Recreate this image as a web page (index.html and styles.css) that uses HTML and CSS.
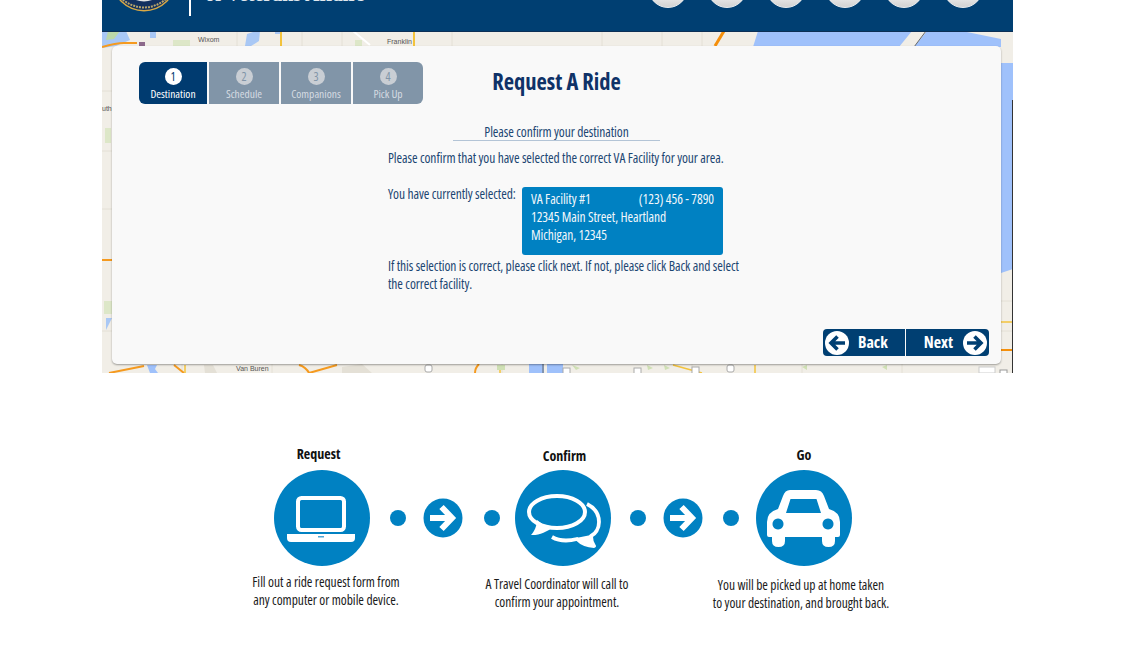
FILE: index.html
```html
<!DOCTYPE html>
<html lang="en">
<head>
<meta charset="utf-8">
<title>Request A Ride</title>
<link rel="stylesheet" href="styles.css">
</head>
<body>
<div class="hero">
  <header class="topbar">
    <div class="brand">
      <svg class="seal" viewBox="0 0 66 66" width="66" height="66">
        <circle cx="33" cy="33" r="32.500" fill="#d9a945"/>
        <circle cx="33" cy="33" r="31" fill="#12305f"/>
        <circle cx="33" cy="33" r="22.500" fill="#e4e6e6"/>
        <path d="M13 43q20 11 40 0" fill="none" stroke="#a8483a" stroke-width="3"/>
        <path d="M7 50q26 23 52 0" fill="none" stroke="#b9a56c" stroke-width="2" stroke-dasharray="2 1"/>
      </svg>
      <span class="brand-rule"></span>
      <span class="brand-name">of Veterans Affairs</span>
    </div>
    <nav class="topnav">
      <span class="topnav-dot"></span><span class="topnav-dot"></span><span class="topnav-dot"></span>
      <span class="topnav-dot"></span><span class="topnav-dot"></span><span class="topnav-dot"></span>
    </nav>
  </header>
  <main class="mapview">
    <svg class="maptiles" viewBox="0 0 911 342" width="911" height="342" aria-hidden="true">
      <rect width="911" height="342" fill="#f1eee7"/>
      <g fill="none" stroke="#e4e0d6" stroke-width="1">
        <path d="M0 60H10M0 120H10M0 178H10M0 300H10M135 0V16M200 0V16M240 0V16M350 0V16M500 0V16M560 0V16M600 0V16M80 333V342M170 333V342M400 333V342M590 333V342M700 333V342M800 333V342M899 270H911M899 300H911"/>
      </g>
      <path d="M251 0L268 14" fill="none" stroke="#fff" stroke-width="2"/>
      <path d="M0 0H24L28 9 14 15 0 17Z" fill="#a9c8f5"/>
      <path d="M6 0H18L12 8 4 9Z" fill="#bcd8a8"/>
      <path d="M3 97h6v15H3zM2 270h8v13H2zM71 9h17v6H71zM253 9h7v6h-7z" fill="#dde7c8"/>
      <path d="M48 1h6v6h-6zM145 3l9-3h4l-1 10-8 5h-6zM173 0h6v3h-6z" fill="#a9c8f5"/>
      <path d="M4 287h6l-6 12z" fill="#a9c8f5"/>
      <path d="M656 0H810L797 16H651Z" fill="#9fc1fb"/>
      <path d="M825 0L812 16H899V8L860 0Z" fill="#9fc1fb"/>
      <path d="M812 16L824 0" stroke="#666" stroke-width="1"/>
      <path d="M899 32H911V238L899 242Z" fill="#9fc1fb"/>
      <path d="M0 16Q14 12 22 12T35 12" fill="none" stroke="#f59a1f" stroke-width="2"/>
      <rect x="37" y="11" width="6" height="5" fill="#8d6a8c"/>
      <path d="M179 0V15" fill="none" stroke="#f3c33c" stroke-width="2"/>
      <path d="M312 0V15" fill="none" stroke="#f3c33c" stroke-width="2"/>
      <path d="M622 0L613 15" fill="none" stroke="#f58f0a" stroke-width="3"/>
      <path d="M0 229H10" fill="none" stroke="#f59a1f" stroke-width="2"/>
      <path d="M899 291H911" fill="none" stroke="#f3c33c" stroke-width="1.500"/>
      <path d="M899 319H911" fill="none" stroke="#f58f0a" stroke-width="2"/>
      <path d="M7 342L42 335M72 334L82 342M197 334Q204 336 207 342M207 342L235 334M373 342Q373 337 377 333" fill="none" stroke="#f59a1f" stroke-width="2"/>
      <path d="M83 334V342M398 334V342M653 334V342M571 334L600 342" fill="none" stroke="#f3c33c" stroke-width="1.500"/>
      <path d="M45 334h10l-2 4 3 4H48zM427 333h13v9h-13zM445 333h16v9h-16z" fill="#9fc1fb"/>
      <path d="M441 333V342" stroke="#8093b0" stroke-width="2"/>
      <path d="M102 334h9l4 8h-12zM240 336l20-3 10 9h-30z" fill="#e4e0d6"/>
      <path d="M395 334h8v5h-8zM470 334l8 3-4 2zM545 334l6 3-5 2zM562 334l6 3-5 2zM700 336l5-2v5zM780 336l5-2v5z" fill="#cfe0b4"/>
      <g fill="#fff" stroke="#aaa" stroke-width="1">
        <rect x="323" y="334" width="7" height="7" rx="2"/>
        <rect x="461" y="337" width="7" height="7"/>
        <rect x="532" y="337" width="7" height="7"/>
        <rect x="590" y="336" width="7" height="7"/>
        <rect x="625" y="334" width="7" height="7" rx="2"/>
      </g>
      <path d="M910.500 69V342" stroke="#333" stroke-width="1"/>
      <rect x="877" y="336" width="16" height="6" fill="#fff" stroke="#ccc"/>
      <rect x="898" y="339" width="7" height="4" fill="#fff" stroke="#999"/>
      <text class="maplabel" x="96" y="11">Wixom</text>
      <text class="maplabel" x="285" y="13">Franklin</text>
      <text class="maplabel" x="0" y="80">uth</text>
      <text class="maplabel" x="134" y="340">Van Buren</text>
    </svg>
    <section class="card">
      <div class="card-head">
        <ol class="stepper">
          <li class="stepper-item is-active"><span class="stepper-num">1</span><span>Destination</span></li>
          <li class="stepper-item"><span class="stepper-num">2</span><span>Schedule</span></li>
          <li class="stepper-item"><span class="stepper-num">3</span><span>Companions</span></li>
          <li class="stepper-item"><span class="stepper-num">4</span><span>Pick Up</span></li>
        </ol>
        <h1 class="card-title">Request A Ride</h1>
      </div>
      <h2 class="subhead">Please confirm your destination</h2>
      <div class="body-copy">
        <p class="lead">Please confirm that you have selected the correct VA Facility for your area.</p>
        <div class="selection">
          <span class="selection-label">You have currently selected:</span>
          <div class="facility">
            <div class="facility-top"><span>VA Facility #1</span><span>(123) 456 - 7890</span></div>
            <div>12345 Main Street, Heartland</div>
            <div>Michigan, 12345</div>
          </div>
        </div>
        <p class="note">If this selection is correct, please click next. If not, please click Back and select<br>the correct facility.</p>
      </div>
      <div class="actions">
        <button class="nav-btn" type="button">
          <svg class="nav-icon" viewBox="0 0 24 24" width="24" height="24"><circle cx="12" cy="12" r="12" fill="#fff"/><path d="M20 12H7M12.500 5.500L6 12l6.500 6.500" fill="none" stroke="#003f72" stroke-width="3.600"/></svg>
          <span>Back</span>
        </button>
        <button class="nav-btn nav-btn-next" type="button">
          <span>Next</span>
          <svg class="nav-icon" viewBox="0 0 24 24" width="24" height="24"><circle cx="12" cy="12" r="12" fill="#fff"/><path d="M4 12H17M11.500 5.500L18 12l-6.500 6.500" fill="none" stroke="#003f72" stroke-width="3.600"/></svg>
        </button>
      </div>
    </section>
  </main>
</div>

<section class="flow">
  <div class="flow-step step-request">
    <h3 class="flow-title">Request</h3>
    <div class="flow-disc">
      <svg viewBox="0 0 96 96" width="96" height="96"><rect x="24" y="28" width="46" height="32" rx="3.500" fill="none" stroke="#fff" stroke-width="4"/><path d="M13 64H81V68q0 4-4 4H17q-4 0-4-4Z" fill="#fff"/><rect x="44" y="66" width="6" height="1.500" fill="#4fa5d4"/></svg>
    </div>
    <p class="flow-caption">Fill out a ride request form from<br>any computer or mobile device.</p>
  </div>
  <div class="flow-link">
    <span class="flow-dot"></span>
    <svg class="flow-arrow" viewBox="0 0 40 40" width="40" height="40"><circle cx="20" cy="20" r="19.500" fill="#0081c2"/><path d="M7 20H27M18.500 9L29 20 18.500 31" fill="none" stroke="#fff" stroke-width="6"/></svg>
    <span class="flow-dot"></span>
  </div>
  <div class="flow-step step-confirm">
    <h3 class="flow-title">Confirm</h3>
    <div class="flow-disc">
      <svg viewBox="0 0 96 96" width="96" height="96"><path d="M72 34C80 38 84 44 84 52 84 59 80 64 76 66 76 70 77 73 79 76 72 76 66 73 62 69 54 71 44 71 37 67" fill="none" stroke="#fff" stroke-width="3.800" stroke-linejoin="round"/><path d="M61 68C66 72 72 76 80 76.500 77 72 76 69 76 65Z" fill="#fff"/><ellipse cx="42" cy="42" rx="28" ry="16" fill="#0081c2" stroke="#fff" stroke-width="4"/><path d="M22 50C22 56 19 62 16 65 24 65.500 32 62 38 57L30 56Z" fill="#fff"/></svg>
    </div>
    <p class="flow-caption">A Travel Coordinator will call to<br>confirm your appointment.</p>
  </div>
  <div class="flow-link link-two">
    <span class="flow-dot"></span>
    <svg class="flow-arrow" viewBox="0 0 40 40" width="40" height="40"><circle cx="20" cy="20" r="19.500" fill="#0081c2"/><path d="M7 20H27M18.500 9L29 20 18.500 31" fill="none" stroke="#fff" stroke-width="6"/></svg>
    <span class="flow-dot"></span>
  </div>
  <div class="flow-step step-go">
    <h3 class="flow-title">Go</h3>
    <div class="flow-disc">
      <svg viewBox="0 0 96 96" width="96" height="96"><path fill="#fff" fill-rule="evenodd" d="M34 20H60q6 0 8 6l5 13q11 3 11 13V65q0 2-2 2H79v4q0 6-6.500 6T66 71V67H29v4q0 6-6.500 6T16 71V67H13q-2 0-2-2V52q0-10 11-13l5-13q2-6 7-6ZM34.500 29 30 43H65L60.500 29ZM22 48.500a5.500 5.500 0 1 0 .01 0ZM72 48.500a5.500 5.500 0 1 0 .01 0Z"/></svg>
    </div>
    <p class="flow-caption">You will be picked up at home taken<br>to your destination, and brought back.</p>
  </div>
</section>
</body>
</html>
```
FILE: styles.css
```css
* { box-sizing: border-box; }
html, body { margin: 0; padding: 0; }
body {
  width: 1140px;
  height: 654px;
  overflow: hidden;
  background: #fff;
  font-family: "Open Sans", "Liberation Sans", sans-serif;
  font-stretch: condensed;
}
.hero { width: 911px; margin-left: 102px; }
.topbar {
  height: 32px;
  background: #003f72;
  border-bottom: 1px solid #0c2f55;
  display: flex;
  justify-content: space-between;
  overflow: hidden;
}
.brand { display: flex; align-items: flex-start; height: 16px; }
.seal { margin: -54px 0 0 8.500px; flex: none; }
.brand-rule { width: 2px; height: 16px; background: #fff; margin-left: 12.500px; }
.brand-name {
  font-family: "Liberation Serif", serif;
  font-stretch: normal;
  font-weight: 700;
  font-size: 20px;
  line-height: 20px;
  color: #dfe7ee;
  margin: -16px 0 0 14px;
  white-space: nowrap;
}
.topnav { display: flex; gap: 19px; margin: -32px 30px 0 0; }
.topnav-dot {
  width: 40px;
  height: 40px;
  border-radius: 50%;
  background: linear-gradient(#c3c7cb 0 60%, #e4e4e4 80%, #d2d2d2);
  border: 1px solid #eef0f2;
}
.mapview { position: relative; height: 341px; padding: 14px 12px 0 10px; overflow: hidden; }
.maptiles { position: absolute; left: 0; top: -1px; }
.maplabel { font-family: "Liberation Sans", sans-serif; font-size: 7px; fill: #555; }
.card {
  position: relative;
  height: 318px;
  background: #f9f9f9;
  border-radius: 5px;
  box-shadow: 0 1px 2px rgba(0,0,0,.35);
  color: #1c4672;
}
.card-head {
  display: grid;
  grid-template-columns: 1fr auto 1fr;
  align-items: start;
  padding: 16px 27px 0;
}
.stepper { display: flex; gap: 2px; list-style: none; margin: 0; padding: 0; width: 284px; height: 42px; }
.stepper-item {
  flex: 0 0 70px;
  display: flex;
  flex-direction: column;
  align-items: center;
  padding-top: 6px;
  background: #8195a8;
  color: #d5dbe2;
  font-size: 11.500px;
  line-height: 14px;
}
.stepper-item:first-child { flex-basis: 68px; border-radius: 6px 0 0 6px; }
.stepper-item:last-child { border-radius: 0 6px 6px 0; }
.stepper-item.is-active { background: #003b70; color: #fff; }
.stepper-num {
  width: 17px;
  height: 17px;
  border-radius: 50%;
  background: #c9ced4;
  color: #8195a8;
  font-size: 12px;
  line-height: 17px;
  text-align: center;
  margin-bottom: 2px;
}
.is-active .stepper-num { background: #fff; color: #003b70; }
.card-title {
  margin: 5px 0 0;
  font-size: 22.500px;
  line-height: 30px;
  font-weight: 700;
  color: #0f3268;
  white-space: nowrap;
}
.subhead {
  width: 207px;
  margin: 17px auto 0;
  padding: 0;
  height: 20px;
  border-bottom: 1px solid #b3c4d6;
  font-size: 13.500px;
  line-height: 22px;
  letter-spacing: -.080px;
  font-weight: 400;
  text-align: center;
  white-space: nowrap;
  color: #1c4672;
}
.body-copy { width: 356px; margin: 8px 0 0 276px; font-size: 13.500px; letter-spacing: -.070px; line-height: 18px; }
.lead { margin: 0; white-space: nowrap; }
.selection { display: flex; align-items: flex-start; margin-top: 20px; }
.selection-label { flex: 0 0 134px; white-space: nowrap; margin-top: -2px; }
.facility {
  width: 201px;
  height: 68px;
  padding: 3px 9px;
  background: #0081c2;
  border-radius: 3px;
  color: #f2f7fb;
}
.facility-top { display: flex; justify-content: space-between; }
.note { margin: 2px 0 0; white-space: nowrap; }
.actions { position: absolute; right: 12px; bottom: 8px; display: flex; gap: 1px; }
.nav-btn {
  width: 82px;
  height: 27px;
  border: 0;
  padding: 0 2px;
  display: flex;
  align-items: center;
  justify-content: flex-start;
  background: #003f72;
  color: #fff;
  font-family: inherit;
  font-stretch: condensed;
  font-weight: 700;
  font-size: 16px;
  line-height: 27px;
  border-radius: 4px 0 0 4px;
}
.nav-btn span { margin-left: 9px; }
.nav-btn-next { width: 83px; border-radius: 0 4px 4px 0; justify-content: flex-end; }
.nav-btn-next span { margin: 0 10px 0 0; }
.nav-icon { flex: none; }
.flow {
  display: flex;
  align-items: flex-start;
  margin: 71px 0 0 274px;
  color: #1b1b1b;
}
.flow-step { width: 96px; flex: none; display: flex; flex-direction: column; align-items: center; }
.flow-title {
  height: 26px;
  margin: 0;
  font-size: 14px;
  line-height: 22px;
  font-weight: 700;
  color: #111;
  white-space: nowrap;
}
.flow-disc { width: 96px; height: 96px; border-radius: 50%; background: #0081c2; }
.flow-disc svg { display: block; }
.flow-caption {
  margin: 7px 0 0;
  font-size: 13.500px;
  letter-spacing: -.030px;
  line-height: 18px;
  text-align: center;
  white-space: nowrap;
}
.step-request .flow-title { margin-left: -7px; line-height: 20px; }
.step-request .flow-caption { margin-left: 8px; }
.step-confirm .flow-title { margin-left: 3px; line-height: 24px; }
.step-confirm .flow-caption { margin: 9px 0 0 -12px; }
.step-go .flow-caption { margin: 10px 0 0 -6px; }
.flow-link {
  width: 145px;
  flex: none;
  height: 96px;
  margin-top: 26px;
  display: flex;
  align-items: center;
  padding-left: 20px;
}
.link-two { padding-left: 19px; }
.flow-dot { width: 16px; height: 16px; border-radius: 50%; background: #0081c2; flex: none; }
.flow-arrow { flex: none; margin: 0 21px 0 17px; }
.link-two .flow-arrow { margin-right: 20px; }
```
